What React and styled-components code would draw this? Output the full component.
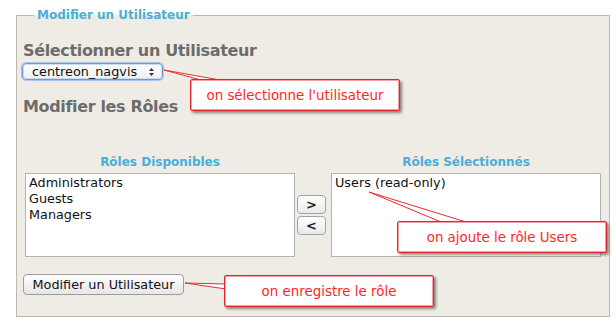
import React from "react";
import styled, { createGlobalStyle } from "styled-components";

const GlobalStyle = createGlobalStyle`
  html, body {
    margin: 0;
    padding: 0;
    background: #ffffff;
  }
  body {
    font-family: "DejaVu Sans", "Liberation Sans", sans-serif;
  }
`;

const available = ["Administrators", "Guests", "Managers"];
const selected = ["Users (read-only)"];

// red callout boxes laid over the form
const callouts = [
  { text: "on sélectionne l'utilisateur", left: 190, top: 79 },
  { text: "on ajoute le rôle Users", left: 397, top: 221 },
  { text: "on enregistre le rôle", left: 224, top: 275 },
];

// pointer wedges: tip, then the two base points at the box
const pointers = [
  "164,70 201,80 220,80",
  "369,192 441,222 466,222",
  "185,283 226,284 226,289",
];

const App = () => {
  return (
    <Page>
      <GlobalStyle />
      <Fieldset>
        <Legend>Modifier un Utilisateur</Legend>
        <Heading top={18}>Sélectionner un Utilisateur</Heading>
        <Select>
          <SelectValue>centreon_nagvis</SelectValue>
          <svg width="7" height="10" viewBox="0 0 7 10">
            <path d="M3.5 1 L6 4 L1 4 Z" fill="#333" />
            <path d="M3.5 9 L6 6 L1 6 Z" fill="#333" />
          </svg>
        </Select>
        <Heading top={17}>Modifier les Rôles</Heading>
        <RolesGrid>
          <ColumnTitle>Rôles Disponibles</ColumnTitle>
          <span />
          <ColumnTitle>Rôles Sélectionnés</ColumnTitle>
          <ListBox>
            {available.map((item) => (
              <ListItem key={item}>{item}</ListItem>
            ))}
          </ListBox>
          <MoveButtons>
            <SmallButton>&gt;</SmallButton>
            <SmallButton>&lt;</SmallButton>
          </MoveButtons>
          <ListBox>
            {selected.map((item) => (
              <ListItem key={item}>{item}</ListItem>
            ))}
          </ListBox>
        </RolesGrid>
        <SubmitButton>Modifier un Utilisateur</SubmitButton>
      </Fieldset>

      <Pointers width="616" height="323" viewBox="0 0 616 323">
        {pointers.map((p) => (
          <polygon
            key={p}
            points={p}
            fill="#ffffff"
            stroke="#ee2a30"
            strokeWidth="1"
            strokeLinejoin="round"
          />
        ))}
      </Pointers>
      {callouts.map((c) => (
        <Callout key={c.text} style={{ left: c.left, top: c.top }}>
          {c.text}
        </Callout>
      ))}
    </Page>
  );
};

const Page = styled.div`
  position: relative;
  width: 616px;
  height: 323px;
  box-sizing: border-box;
  padding: 8px 6px 0 16px;
  overflow: hidden;
`;

const Fieldset = styled.fieldset`
  box-sizing: border-box;
  width: 594px;
  margin: 0;
  padding: 0 6px 21px 6px;
  border: 1px solid #bdb9ae;
  background: #efece5;
  min-width: 0;
`;

const Legend = styled.legend`
  margin-left: 11px;
  padding: 0 3px;
  font-size: 12px;
  line-height: 15px;
  font-weight: bold;
  color: #4aaed6;
`;

const Heading = styled.div`
  margin-top: ${(props) => props.top}px;
  font-size: 16px;
  line-height: 19px;
  font-weight: bold;
  letter-spacing: -0.35px;
  color: #6c6c6c;
`;

const Select = styled.div`
  box-sizing: border-box;
  display: flex;
  align-items: center;
  justify-content: space-between;
  width: 141px;
  height: 17px;
  margin: 3px 0 0 -1px;
  padding: 0 7px 0 9px;
  border: 1px solid #6d9bd6;
  border-radius: 4px;
  background: linear-gradient(#ffffff, #eef0f3);
  box-shadow: 0 0 0 1px #a9c6ec, inset 0 0 0 1px #c9dcf4;
`;

const SelectValue = styled.span`
  font-size: 12.8px;
  line-height: 15px;
  color: #111;
`;

const RolesGrid = styled.div`
  display: grid;
  grid-template-columns: 270px 36px 270px;
  margin: 39px 0 0 2px;
`;

const ColumnTitle = styled.div`
  text-align: center;
  font-size: 12px;
  line-height: 15px;
  font-weight: bold;
  color: #4aaed6;
  margin-bottom: 3px;
`;

const ListBox = styled.div`
  box-sizing: border-box;
  height: 84px;
  padding: 1px 3px;
  background: #ffffff;
  border: 1px solid #b3b3b3;
`;

const ListItem = styled.div`
  font-size: 12.8px;
  line-height: 16px;
  color: #111;
  white-space: nowrap;
`;

const MoveButtons = styled.div`
  display: flex;
  flex-direction: column;
  justify-content: center;
  gap: 2px;
  padding-left: 2px;
`;

const SmallButton = styled.div`
  box-sizing: border-box;
  width: 29px;
  height: 19px;
  display: flex;
  align-items: center;
  justify-content: center;
  border: 1px solid #a3a3a3;
  border-radius: 4px;
  background: linear-gradient(#ffffff, #e9e9e9);
  font-size: 13px;
  font-weight: bold;
  color: #222;
`;

const SubmitButton = styled.div`
  box-sizing: border-box;
  width: 161px;
  height: 21px;
  margin-top: 17px;
  display: flex;
  align-items: center;
  justify-content: center;
  border: 1px solid #9c9c9c;
  border-radius: 4px;
  background: linear-gradient(#ffffff, #e6e6e6);
  font-size: 12.8px;
  color: #111;
`;

const Pointers = styled.svg`
  position: absolute;
  left: 0;
  top: 0;
  pointer-events: none;
`;

const Callout = styled.div`
  position: absolute;
  box-sizing: border-box;
  width: 210px;
  height: 32px;
  display: flex;
  align-items: center;
  justify-content: center;
  padding-top: 1px;
  background: #ffffff;
  border: 1px solid #e0262d;
  border-radius: 2px;
  box-shadow: inset 0 0 0 1px #ff9da1, 2px 2px 3px rgba(0, 0, 0, 0.45);
  font-size: 13.4px;
  color: #ff2626;
  white-space: nowrap;
`;

export default App;
